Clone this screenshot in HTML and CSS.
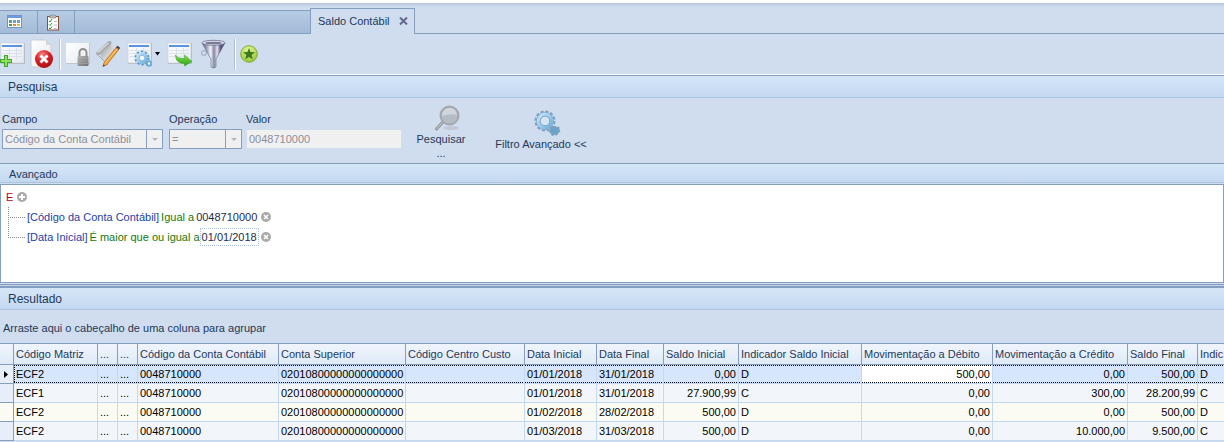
FILE: index.html
```html
<!DOCTYPE html>
<html lang="pt-BR">
<head>
<meta charset="utf-8">
<title>Saldo Contábil</title>
<link rel="stylesheet" href="styles.css">
</head>
<body>
<svg class="defs" aria-hidden="true">
  <defs>
    <linearGradient id="metal" x1="0" y1="0" x2="1" y2="0">
      <stop offset="0" stop-color="#565a7a"/><stop offset=".2" stop-color="#9a9db8"/><stop offset=".38" stop-color="#f4f5fa"/><stop offset=".52" stop-color="#8386a4"/><stop offset=".66" stop-color="#e4e5f0"/><stop offset=".8" stop-color="#5a5c7c"/><stop offset="1" stop-color="#46486a"/>
    </linearGradient>
    <linearGradient id="paper" x1="0" y1="0" x2="1" y2="1">
      <stop offset="0" stop-color="#ffffff"/><stop offset="1" stop-color="#e6e9ee"/>
    </linearGradient>
    <linearGradient id="lockbody" x1="0" y1="0" x2="1" y2="1">
      <stop offset="0" stop-color="#b8b8b8"/><stop offset="1" stop-color="#6e6e6e"/>
    </linearGradient>
    <linearGradient id="roll" x1="0" y1="0" x2="1" y2="1">
      <stop offset="0" stop-color="#8f9193"/><stop offset=".5" stop-color="#d4d5d6"/><stop offset="1" stop-color="#96989a"/>
    </linearGradient>
    <linearGradient id="gearfill" x1="0" y1="0" x2="1" y2="1">
      <stop offset="0" stop-color="#c4e6fa"/><stop offset="1" stop-color="#6fb0de"/>
    </linearGradient>
    <radialGradient id="red" cx=".4" cy=".25" r=".8">
      <stop offset="0" stop-color="#f58080"/><stop offset=".5" stop-color="#d81f26"/><stop offset="1" stop-color="#a80c14"/>
    </radialGradient>
    <radialGradient id="lime" cx=".45" cy=".25" r=".8">
      <stop offset="0" stop-color="#e6f59a"/><stop offset="1" stop-color="#8fc52c"/>
    </radialGradient>
    <linearGradient id="green" x1="0" y1="0" x2="0" y2="1">
      <stop offset="0" stop-color="#8be04a"/><stop offset="1" stop-color="#22a012"/>
    </linearGradient>
    <symbol id="sheet" viewBox="0 0 26 24">
      <rect x="1" y="1" width="24" height="21" fill="#b4bac4"/>
      <rect x="1" y="1" width="23" height="20" fill="url(#paper)" stroke="#c6cbd3" stroke-width=".6"/>
      <rect x="2" y="3" width="20" height="2" fill="#5a92e6"/>
      <path d="M2 8.500H22M2 11.500H22M2 14.500H22M9.500 6V18M16.500 6V18" stroke="#dbe1eb" fill="none"/>
    </symbol>
  </defs>
</svg>

<header class="topline"></header>
<nav class="tabs">
  <button class="tab" aria-label="Calendário">
    <svg width="16" height="16" viewBox="0 0 16 16"><rect x=".5" y="1.500" width="14" height="12" fill="#fff" stroke="#7292c4"/><rect x="1" y="2" width="13" height="2" fill="#6d9be0"/><path d="M2 6h3v3H2z" fill="#6aa56e"/><path d="M2 10h3v2H2z" fill="#4f9a50"/><path d="M6 6h3v3H6zM10 6h3v3h-3z" fill="#6f9fe0"/><path d="M6 10h3v2H6z" fill="#e58a3c"/><path d="M10 10h3v2h-3z" fill="#e9b534"/></svg>
  </button>
  <button class="tab tab-tasks" aria-label="Tarefas">
    <svg width="14" height="17" viewBox="0 0 14 17"><rect x="1.500" y="2.500" width="11" height="13.500" fill="#fff" stroke="#8a5234"/><path d="M4 1.500h2L7 .5l1 1h2V4H4z" fill="#b9b9b9" stroke="#777" stroke-width=".5"/><path d="M3 7l1 1 2-3M3 10.500l1 1 2-2.500M3 14l1 1 2-2.500" fill="none" stroke="#249a24"/><path d="M8 7.500h3M8 11h3M8 14.500h3" stroke="#9babc0" stroke-width=".8"/></svg>
  </button>
  <div class="tab-strip"></div>
  <div class="tab-active">
    <span>Saldo Contábil</span>
    <button class="close" aria-label="Fechar"><svg width="9" height="8" viewBox="0 0 9 8"><path d="M1 .5l7 7M8 .5l-7 7" stroke="#62688f" stroke-width="2"/></svg></button>
  </div>
  <div class="tab-rest"></div>
</nav>

<div class="toolbar">
  <button class="tool t-new" aria-label="Novo"><svg width="26" height="28" viewBox="0 0 26 28"><use href="#sheet" x="0" y="2" width="26" height="24"/><path d="M4 15h4v4h4v4H8v4H4v-4H0v-4h4z" fill="#3fa62e"/><path d="M5 16h2v4h4v2H7v4H5v-4H1v-2h4z" fill="#8fe05c"/></svg></button>
  <button class="tool t-del" aria-label="Excluir"><svg width="24" height="30" viewBox="0 0 24 30"><path d="M1 1h15l5 5v22H1z" fill="url(#paper)" stroke="#c3c6cb" stroke-width=".8"/><path d="M16 1v5h5z" fill="#d4d7db"/><circle cx="14" cy="20" r="9" fill="url(#red)"/><path d="M10.500 16.500l7 7M17.500 16.500l-7 7" stroke="#fff" stroke-width="2.800"/></svg></button>
  <span class="sep"></span>
  <button class="tool t-lock" aria-label="Bloquear"><svg width="26" height="28" viewBox="0 0 26 28"><rect x="1" y="3" width="24" height="21" fill="#c3c8d0"/><rect x="1" y="3" width="23" height="20" fill="url(#paper)"/><path d="M14.500 17v-4.500a3.500 3.500 0 0 1 7 0V17" fill="none" stroke="#909090" stroke-width="2"/><rect x="12.500" y="16" width="11" height="10" rx="1" fill="url(#lockbody)"/><path d="M13 18.500h10M13 21h10M13 23.500h10" stroke="#a6a6a6" stroke-width=".7"/></svg></button>
  <button class="tool t-edit" aria-label="Editar"><svg width="26" height="28" viewBox="0 0 26 28"><path d="M5 11L14 4l8 8-10 12-5-4z" fill="url(#roll)"/><path d="M1 13L12.500 2q3-2 4 0 0 3-3 4.500L6 13q-1 3-3 2.500-2-.5-2-2.500z" fill="#a7a9ab"/><path d="M3 12.500L13.500 3" stroke="#d9dadb" stroke-width="1.400"/><path d="M4 16l9 9" stroke="#a5a7aa"/><path d="M22 6.500l2.500 2L11.500 25l-3.500 1.500 1-3.800z" fill="#f2a22a" stroke="#a05a16" stroke-width=".6"/><path d="M21 7.800l1.500-2 2.600 2-1.600 2z" fill="#4a4048"/><path d="M8.500 24.500l1.500 1-2 1z" fill="#333"/><path d="M22.500 8.500L10 23.500" stroke="#ffd98a" stroke-width=".8"/></svg></button>
  <button class="tool t-gear" aria-label="Configurar"><svg width="26" height="28" viewBox="0 0 26 28"><use href="#sheet" x="0" y="2" width="26" height="24"/><circle cx="15" cy="18" r="6.300" fill="none" stroke="#5b9bcb" stroke-width="2.400" stroke-dasharray="2.400 1.558"/><circle cx="15" cy="18" r="4.500" fill="#f2f8fd" stroke="url(#gearfill)" stroke-width="3"/><circle cx="15" cy="18" r="2.800" fill="#f4fafe" stroke="#5b9bcb" stroke-width=".7"/><circle cx="22" cy="23.500" r="2.200" fill="#f4fafe" stroke="#6eaad6" stroke-width="2"/></svg><svg class="caret" width="5" height="4" viewBox="0 0 5 4"><path d="M0 0h5L2.500 3.500z" fill="#000"/></svg></button>
  <button class="tool t-go" aria-label="Exportar"><svg width="26" height="28" viewBox="0 0 26 28"><use href="#sheet" x="0" y="2" width="26" height="24"/><path d="M8.500 15q2 4 9 3.500V15l7.500 6.500-7.500 4.500v-2.500q-9 0-9-8.500z" fill="url(#green)" stroke="#2c9a1e" stroke-width=".5"/></svg></button>
  <button class="tool t-filter" aria-label="Filtrar"><svg width="26" height="30" viewBox="0 0 26 30"><circle cx="4" cy="14" r="2.400" fill="none" stroke="#a8b3c8" stroke-width="1.200"/><path d="M2 4L11 20v8q2.500 2 5 0v-8L25 4z" fill="url(#metal)" stroke="#666a8a" stroke-width=".6"/><ellipse cx="13.500" cy="3.800" rx="11.500" ry="2.500" fill="#e2e4ef" stroke="#6a6d8c" stroke-width=".8"/><ellipse cx="13.500" cy="4" rx="8.500" ry="1.300" fill="#777b98"/></svg></button>
  <span class="sep"></span>
  <button class="tool t-star" aria-label="Favoritos"><svg width="18" height="18" viewBox="0 0 18 18"><circle cx="9" cy="9" r="8.300" fill="url(#lime)" stroke="#7fae38"/><path d="M9 3l1.600 4.100 4.400.2-3.400 2.700 1.200 4.300L9 11.900l-3.800 2.400 1.200-4.300L3 7.300l4.400-.2z" fill="#3d7a1c"/></svg></button>
</div>

<main>
<section class="search">
  <h2 class="bar">Pesquisa</h2>
  <form class="fields">
    <div class="field campo"><label for="campo">Campo</label>
      <div class="combo"><select id="campo" disabled><option>Código da Conta Contábil</option></select><span class="drop"></span></div></div>
    <div class="field operacao"><label for="op">Operação</label>
      <div class="combo"><select id="op" disabled><option>=</option></select><span class="drop"></span></div></div>
    <div class="field valor"><label for="valor">Valor</label><input id="valor" value="0048710000" disabled></div>
    <button type="button" class="action search-btn">
      <svg width="28" height="28" viewBox="0 0 28 28"><ellipse cx="18" cy="24" rx="8" ry="2" fill="#c1cad7"/><path d="M9.500 18.500L3.500 25" stroke="#8c9094" stroke-width="3" stroke-linecap="round"/><path d="M9.500 18.500L3.500 25" stroke="#dedfe0" stroke-width="1"/><circle cx="16.500" cy="11.500" r="9" fill="#b4bdc6" stroke="#a4a8ae" stroke-width="2"/><path d="M9 12q8-3 15-1a7.500 7.500 0 0 0-15 1z" fill="#d0d6dd"/></svg>
      <span>Pesquisar<br>...</span>
    </button>
    <button type="button" class="action adv-btn">
      <svg width="28" height="28" viewBox="0 0 28 28"><circle cx="12" cy="12" r="9.500" fill="none" stroke="#7f9fbc" stroke-width="2" stroke-dasharray="3.200 1.774"/><circle cx="12" cy="12" r="8.300" fill="none" stroke="#7fa9cc" stroke-width="1.200"/><circle cx="12" cy="12" r="6.500" fill="none" stroke="url(#gearfill)" stroke-width="3.400"/><circle cx="12" cy="12" r="4.800" fill="#d8e4f2" stroke="#7d9fc0"/><path d="M22 17l1.500 1.500 2.500-.5v3l1 1.500-2 1-1 2.500-2.500-.5-2.500 1-1-2.500-2-1.500 1.500-1.500V18l2.500.5z" fill="#6aa4ca" stroke="#809db8"/></svg>
      <span>Filtro Avançado &lt;&lt;</span>
    </button>
  </form>
</section>

<section class="advanced">
  <h3 class="bar bar-small">Avançado</h3>
  <div class="tree">
    <div class="node root"><a class="op" href="#">E</a><button class="round" aria-label="Adicionar"><svg width="10" height="10" viewBox="0 0 10 10"><circle cx="5" cy="5" r="5" fill="#a9a9a9"/><path d="M5 2v6M2 5h6" stroke="#fff" stroke-width="2"/></svg></button></div>
    <div class="node child first"><a class="name" href="#">[Código da Conta Contábil]</a><a class="cond" href="#">Igual a</a><a class="val" href="#">0048710000</a><button class="round" aria-label="Remover"><svg width="10" height="10" viewBox="0 0 10 10"><circle cx="5" cy="5" r="5" fill="#a9a9a9"/><path d="M3 3l4 4M7 3L3 7" stroke="#fff" stroke-width="1.600"/></svg></button></div>
    <div class="node child"><a class="name" href="#">[Data Inicial]</a><a class="cond" href="#">É maior que ou igual a</a><a class="val focus" href="#">01/01/2018</a><button class="round" aria-label="Remover"><svg width="10" height="10" viewBox="0 0 10 10"><circle cx="5" cy="5" r="5" fill="#a9a9a9"/><path d="M3 3l4 4M7 3L3 7" stroke="#fff" stroke-width="1.600"/></svg></button></div>
  </div>
</section>
<div class="splitter"></div>

<section class="result">
  <h2 class="bar">Resultado</h2>
  <p class="group">Arraste aqui o cabeçalho de uma coluna para agrupar</p>
  <table class="grid">
    <colgroup><col class="w14"><col class="w84"><col class="w20"><col class="w20"><col class="w141"><col class="w127"><col class="w119"><col class="w72"><col class="w67"><col class="w75"><col class="w123"><col class="w131"><col class="w135"><col class="w70"><col></colgroup>
    <thead><tr><th></th><th>Código Matriz</th><th>...</th><th>...</th><th>Código da Conta Contábil</th><th>Conta Superior</th><th>Código Centro Custo</th><th>Data Inicial</th><th>Data Final</th><th>Saldo Inicial</th><th>Indicador Saldo Inicial</th><th>Movimentação a Débito</th><th>Movimentação a Crédito</th><th>Saldo Final</th><th>Indic</th></tr></thead>
    <tbody>
      <tr class="current"><td class="mark"><svg width="4" height="7" viewBox="0 0 4 7"><path d="M0 0l4 3.500L0 7z"/></svg></td><td class="start">ECF2</td><td>...</td><td>...</td><td>0048710000</td><td>02010800000000000000</td><td></td><td>01/01/2018</td><td>31/01/2018</td><td class="num">0,00</td><td>D</td><td class="num edit">500,00</td><td class="num">0,00</td><td class="num">500,00</td><td>D</td></tr>
      <tr><td class="mark"></td><td>ECF1</td><td>...</td><td>...</td><td>0048710000</td><td>02010800000000000000</td><td></td><td>01/01/2018</td><td>31/01/2018</td><td class="num">27.900,99</td><td>C</td><td class="num">0,00</td><td class="num">300,00</td><td class="num">28.200,99</td><td>C</td></tr>
      <tr class="odd"><td class="mark"></td><td>ECF2</td><td>...</td><td>...</td><td>0048710000</td><td>02010800000000000000</td><td></td><td>01/02/2018</td><td>28/02/2018</td><td class="num">500,00</td><td>D</td><td class="num">0,00</td><td class="num">0,00</td><td class="num">500,00</td><td>D</td></tr>
      <tr><td class="mark"></td><td>ECF2</td><td>...</td><td>...</td><td>0048710000</td><td>02010800000000000000</td><td></td><td>01/03/2018</td><td>31/03/2018</td><td class="num">500,00</td><td>D</td><td class="num">0,00</td><td class="num">10.000,00</td><td class="num">9.500,00</td><td>C</td></tr>
    </tbody>
  </table>
</section>
</main>
</body>
</html>
```
FILE: styles.css
```css
* { box-sizing: border-box; }
body {
  margin: 0;
  background: #d0ddee;
  color: #1e395b;
  font: 11px/14px "Liberation Sans", Arial, sans-serif;
}
button, input, select { font: inherit; color: inherit; }
button { border: 0; padding: 0; background: none; display: flex; align-items: center; justify-content: center; }
a { text-decoration: none; color: inherit; }
svg { display: block; flex: none; }
.defs { position: absolute; width: 0; height: 0; }

.topline { height: 8px; border-top: 3px solid #fff; background: linear-gradient(#b4c6da, #d0ddee 4px); }

.tabs { display: flex; align-items: flex-end; height: 26px; }
.tab, .tab-strip { height: 24px; border: 1px solid #859ebf; border-width: 1px 0; background: linear-gradient(#b6cce3, #a3bbd8); }
.tab { width: 38px; border-right-width: 1px; padding-right: 7px; }
.tab-tasks { width: 37px; padding-right: 6px; }
.tab-strip { width: 235px; }
.tab-active {
  display: flex;
  align-items: center;
  justify-content: space-between;
  width: 105px;
  height: 26px;
  padding: 0 6px 1px 7px;
  border: 1px solid #859ebf;
  border-bottom: 0;
}
.tab-rest { flex: 1; height: 26px; border-bottom: 1px solid #859ebf; }

.toolbar { display: flex; align-items: center; height: 41px; border-bottom: 1px solid #fff; }
.sep { width: 2px; height: 31px; border-left: 1px solid #b3bfd0; border-right: 1px solid #fff; }
.t-del { margin: 0 5px 0 4px; }
.t-lock { margin-left: 4px; }
.t-edit { margin: 0 6px 0 4px; }
.caret { margin-left: 2px; }
.t-go { margin: 0 7px 0 7px; }
.t-filter { margin-right: 8px; }
.t-star { margin-left: 4px; }

.bar {
  margin: 0;
  height: 23px;
  padding: 0 8px;
  border-top: 1px solid #859ebf;
  border-bottom: 1px solid #a9c3e0;
  background: linear-gradient(#d6e6f8, #c3d8f0);
  font-size: 12px;
  line-height: 23px;
  font-weight: 400;
}
.bar-small { height: 20px; padding: 0 9px; font-size: 11px; line-height: 20px; }

.fields { display: flex; height: 65px; padding-left: 2px; align-items: flex-start; }
.field { display: flex; flex-direction: column; gap: 3px; padding-top: 14px; }
.campo { width: 161px; margin-right: 6px; }
.operacao { width: 73px; margin-right: 4px; }
.valor { width: 156px; margin-right: 4px; }
.combo { display: flex; height: 20px; border: 1px solid #859ebf; background: #f0f0f0; }
.combo select { flex: 1; min-width: 0; appearance: none; border: 0; padding: 0 2px; background: none; color: #8b8f9c; opacity: 1; }
.drop { width: 16px; border-left: 1px solid #859ebf; display: flex; align-items: center; justify-content: center; }
.drop::after { content: ""; border: 3px solid transparent; border-top-color: #b0b5c4; border-bottom: 0; }
.valor input { height: 20px; border: 1px solid #d0ddee; padding: 0 2px; background: #f0f0f0; color: #8b8f9c; }
.action { flex-direction: column; }
.action svg { margin-left: 12px; }
.search-btn { width: 70px; padding-top: 6px; }
.adv-btn { width: 110px; margin-left: 10px; padding-top: 11px; }

.advanced .bar { margin-bottom: 1px; }
.tree { height: 99px; padding: 2px 5px; border: 1px solid #859ebf; background: #fff; }
.node { display: flex; align-items: center; height: 20px; gap: 4px; }
.op { color: #c00010; }
.child { position: relative; margin-left: 2px; padding-left: 19px; gap: 2px; }
.child::before { content: ""; position: absolute; left: 0; top: -10px; width: 16px; height: 20px; border: 1px dotted #8a8a8a; border-width: 0 0 1px 1px; }
.first::before { top: 0; height: 10px; }
.child .round { margin-left: 2px; }
.name { color: #1c3fa8; }
.cond { color: #177a0c; }
.val { color: #1e2b4e; }
.focus { outline: 1px dotted #a6bfdc; outline-offset: 1px; }

.splitter { height: 3px; border-top: 1px solid #d0ddee; border-bottom: 1px solid #c3d4ea; background: #859ebf; }
.result .bar { height: 24px; border-top-width: 2px; }
.group { margin: 0; height: 33px; padding: 0 3px; line-height: 37px; }

.grid { width: 100%; border-collapse: separate; border-spacing: 0; table-layout: fixed; border-top: 1px solid #859ebf; }
.w14 { width: 14px; } .w84 { width: 84px; } .w20 { width: 20px; } .w141 { width: 141px; } .w127 { width: 127px; }
.w119 { width: 119px; } .w72 { width: 72px; } .w67 { width: 67px; } .w75 { width: 75px; } .w123 { width: 123px; }
.w131 { width: 131px; } .w135 { width: 135px; } .w70 { width: 70px; }
.grid th, .grid td { padding: 0 2px; text-align: left; white-space: nowrap; font-weight: 400; }
.grid th { height: 21px; border-right: 1px solid #859ebf; border-bottom: 1px solid #859ebf; background: linear-gradient(#f0f5fc, #dfeaf8); }
.grid td { height: 19px; color: #000; background: #f2f5fa; border-right: 1px solid #c3d8f2; border-bottom: 1px solid #c3d8f2; }
.grid .odd td { background: #fbfbf4; }
.grid .mark, .grid .current .mark { background: #e6eefa; border-color: #859ebf; padding-left: 4px; }
.grid th:last-child, .grid td:last-child { border-right: 0; }
.grid .current td {
  background:
    repeating-linear-gradient(90deg, #000 0 1px, transparent 1px 2px) top / 100% 1px no-repeat,
    repeating-linear-gradient(90deg, #000 0 1px, transparent 1px 2px) bottom / 100% 1px no-repeat,
    #d5e6fd;
}
.grid .current .start {
  background:
    repeating-linear-gradient(90deg, #000 0 1px, transparent 1px 2px) top / 100% 1px no-repeat,
    repeating-linear-gradient(90deg, #000 0 1px, transparent 1px 2px) bottom / 100% 1px no-repeat,
    repeating-linear-gradient(#000 0 1px, transparent 1px 2px) left / 1px 100% no-repeat,
    #d5e6fd;
}
.grid .current .edit { background-color: #fff; }
.grid .current .mark { background: #e6eefa; }
.grid .num { text-align: right; }
```
